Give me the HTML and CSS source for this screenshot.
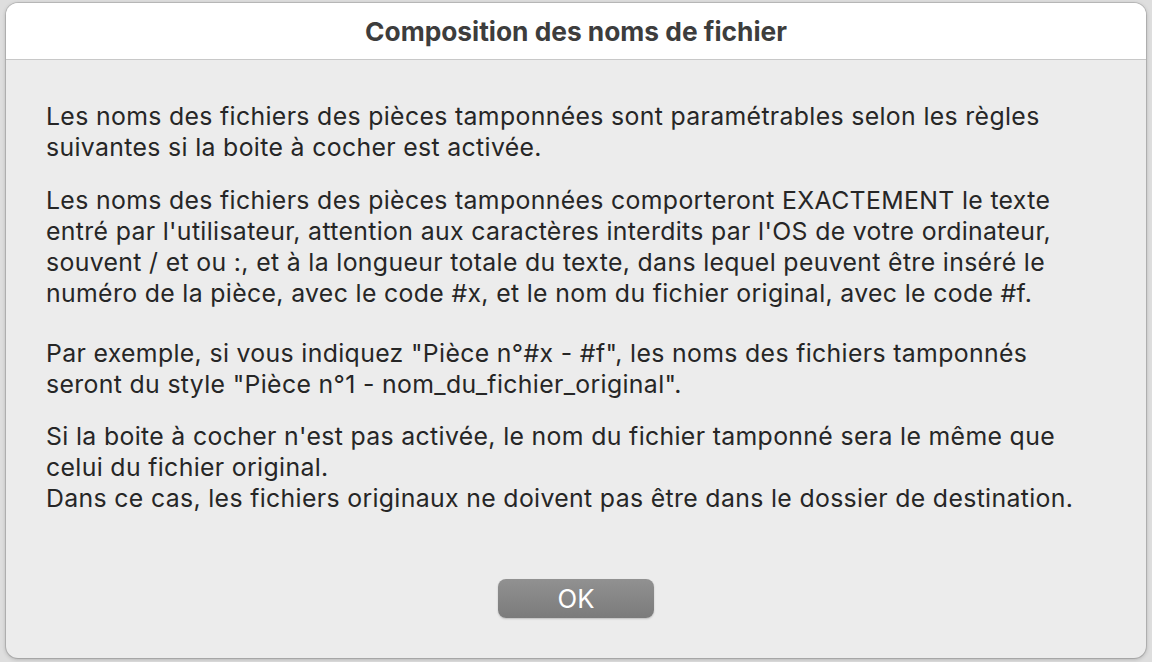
FILE: index.html
```html
<!DOCTYPE html>
<html lang="fr">
<head>
  <meta charset="UTF-8">
  <title>Composition des noms de fichier</title>
  <link rel="stylesheet" href="styles.css">
</head>
<body>

  <div class="fenetre">
    <div class="titre">Composition des noms de fichier</div>

    <div class="contenu">
      <p class="p1">Les noms des fichiers des pièces tamponnées sont paramétrables selon les règles<br>suivantes si la boite à cocher est activée.</p>

      <p class="p2">Les noms des fichiers des pièces tamponnées comporteront EXACTEMENT le texte<br>entré par l'utilisateur, attention aux caractères interdits par l'OS de votre ordinateur,<br>souvent / et ou :, et à la longueur totale du texte, dans lequel peuvent être inséré le<br>numéro de la pièce, avec le code #x, et le nom du fichier original, avec le code #f.</p>

      <p class="p3">Par exemple, si vous indiquez "Pièce n°#x - #f", les noms des fichiers tamponnés<br>seront du style "Pièce n°1 - nom_du_fichier_original".</p>

      <p class="p4">Si la boite à cocher n'est pas activée, le nom du fichier tamponné sera le même que<br>celui du fichier original.<br>Dans ce cas, les fichiers originaux ne doivent pas être dans le dossier de destination.</p>
    </div>

    <div class="boutons">
      <button class="ok">OK</button>
    </div>
  </div>

</body>
</html>
```

FILE: styles.css
```css
html, body {
  height: 100%;
}

body {
  margin: 0;
  padding: 3px 6px 4px 6px;
  box-sizing: border-box;
  background-color: #dedede;
  font-family: Inter, "Noto Sans", sans-serif;
}

.fenetre {
  height: 100%;
  display: flex;
  flex-direction: column;
  background-color: #ececec;
  border-radius: 12px;
  overflow: hidden;
  box-shadow: 0 0 0 1px rgba(0, 0, 0, 0.12), 0 1px 4px rgba(0, 0, 0, 0.25);
}

.titre {
  height: 56px;
  flex-shrink: 0;
  background-color: #fff;
  border-bottom: 1px solid #c8c8c8;
  display: flex;
  align-items: center;
  justify-content: center;
  font-weight: bold;
  font-size: 26.3px;
  color: #3d3d3d;
}

.contenu {
  padding: 41px 0 0 40px;
  flex: 1;
}

.contenu p {
  margin: 0;
  font-size: 24.8px;
  letter-spacing: 0.35px;
  line-height: 31px;
  color: #262626;
  white-space: nowrap;
}

.p2 {
  margin-top: 22px !important;
}

.p3 {
  margin-top: 29px !important;
}

.p4 {
  margin-top: 21px !important;
}

.boutons {
  display: flex;
  justify-content: center;
  padding-bottom: 40px;
}

.ok {
  width: 156px;
  height: 39px;
  border: none;
  border-radius: 8px;
  background: linear-gradient(#919191, #7b7b7b);
  color: white;
  font-family: Inter, "Noto Sans", sans-serif;
  font-size: 25.7px;
  box-shadow: 0 1px 2px rgba(0, 0, 0, 0.2);
}
```
